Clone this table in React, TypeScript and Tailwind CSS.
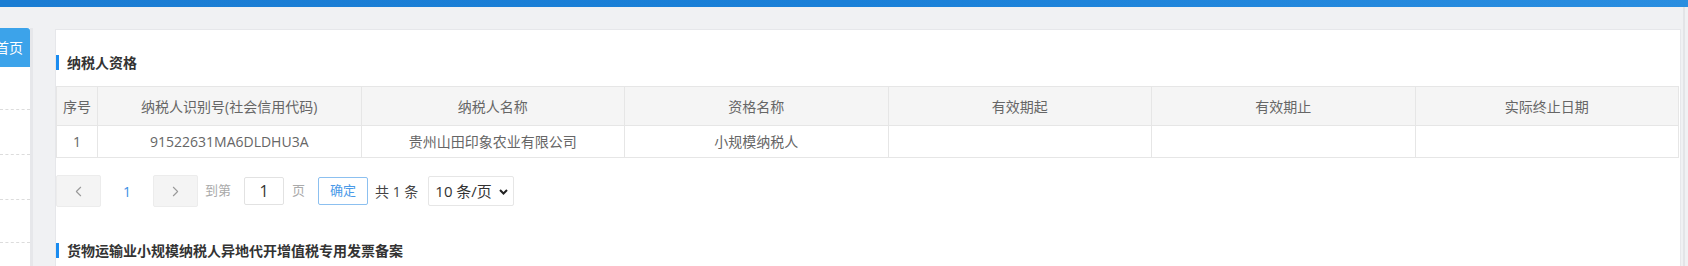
import { FiChevronLeft, FiChevronRight } from 'react-icons/fi'

const cols = ['序号', '纳税人识别号(社会信用代码)', '纳税人名称', '资格名称', '有效期起', '有效期止', '实际终止日期']
const row = ['1', '91522631MA6DLDHU3A', '贵州山田印象农业有限公司', '小规模纳税人', '', '', '']

function Title({ text }: { text: string }) {
  return (
    <div className="flex items-center h-[15px]">
      <span className="w-[3px] h-[15px] bg-[#1a8cf0]" />
      <span className="ml-[8px] text-[14px] font-bold text-[#333] leading-none">{text}</span>
    </div>
  )
}

export default function App() {
  return (
    <div
      className="w-[1688px] h-[266px] overflow-hidden bg-[#f0f1f3] flex flex-col"
      style={{ fontFamily: '"Open Sans", "Noto Sans CJK SC", sans-serif' }}
    >
      <div className="h-[7px] shrink-0 bg-gradient-to-r from-[#1b7dd3] via-[#1a80d8] to-[#2a8ee0]" />

      <div className="flex flex-1 min-h-0">
        {/* sidebar */}
        <div className="w-[33px] mt-[21px] bg-white border-r-[3px] border-[#e6e7ea] shrink-0">
          <div className="h-[39px] bg-[#3ca3ea] rounded-tr-[3px] flex items-center justify-end pr-[7px] overflow-hidden">
            <span className="text-white text-[14px] whitespace-nowrap">首页</span>
          </div>
          <div className="h-[43px] border-b border-dashed border-[#dcdcdc]" />
          <div className="h-[45px] border-b border-dashed border-[#dcdcdc]" />
          <div className="h-[45px] border-b border-dashed border-[#dcdcdc]" />
          <div className="h-[43px] border-b border-dashed border-[#dcdcdc]" />
        </div>

        {/* card */}
        <div className="ml-[22px] mt-[22px] w-[1626px] bg-white border-l border-r border-t border-[#e6e7ea] shrink-0 pt-[25px]">
          <Title text="纳税人资格" />

          <table className="mt-[16px] w-[1623px] table-fixed border-collapse text-[14px] text-[#666]">
            <colgroup>
              <col className="w-[41px]" />
              <col /><col /><col /><col /><col /><col />
            </colgroup>
            <thead>
              <tr className="h-[39px] bg-[#f5f5f5]">
                {cols.map((c) => (
                  <th key={c} className="border border-[#e6e6e6] font-normal text-center whitespace-nowrap">{c}</th>
                ))}
              </tr>
            </thead>
            <tbody>
              <tr className="h-[32px]">
                {row.map((c, i) => (
                  <td key={i} className="border border-[#e6e6e6] text-center whitespace-nowrap">{c}</td>
                ))}
              </tr>
            </tbody>
          </table>

          {/* pagination */}
          <div className="mt-[17px] h-[32px] flex items-center">
            <button className="w-[45px] h-[32px] bg-[#f4f4f4] border border-[#ececec] rounded-[2px] flex items-center justify-center text-[#999]">
              <FiChevronLeft size={17} strokeWidth={1.5} />
            </button>
            <span className="w-[52px] text-center text-[14px] text-[#3b8fe6]">1</span>
            <button className="w-[45px] h-[32px] bg-[#f4f4f4] border border-[#ececec] rounded-[2px] flex items-center justify-center text-[#999]">
              <FiChevronRight size={17} strokeWidth={1.5} />
            </button>
            <span className="ml-[7px] text-[13px] text-[#aaa]">到第</span>
            <div className="ml-[13px] w-[40px] h-[28px] border border-[#e2e2e2] rounded-[2px] flex items-center justify-center text-[16px] text-[#333]">1</div>
            <span className="ml-[8px] text-[13px] text-[#aaa]">页</span>
            <button className="ml-[13px] w-[50px] h-[28px] border border-[#8cc0f0] rounded-[2px] text-[13px] text-[#4a9ae8] flex items-center justify-center">确定</button>
            <span className="ml-[7px] text-[14px] text-[#444] whitespace-pre">共 1 条</span>
            <div className="ml-[10px] w-[86px] h-[30px] border border-[#e6e6e6] rounded-[2px] flex items-center pl-[6px] pr-[5px] justify-between text-[15px] text-[#333]">
              <span className="whitespace-pre">10 条/页</span>
              <svg width="9" height="6" viewBox="0 0 9 6" className="mt-[1px]">
                <path d="M1 1 L4.5 4.5 L8 1" fill="none" stroke="#222" strokeWidth="2" />
              </svg>
            </div>
          </div>

          <div className="mt-[36px]">
            <Title text="货物运输业小规模纳税人异地代开增值税专用发票备案" />
          </div>
        </div>

        <div className="ml-[2px] w-[2px] bg-[#e3e4e7] shrink-0" />
      </div>
    </div>
  )
}
